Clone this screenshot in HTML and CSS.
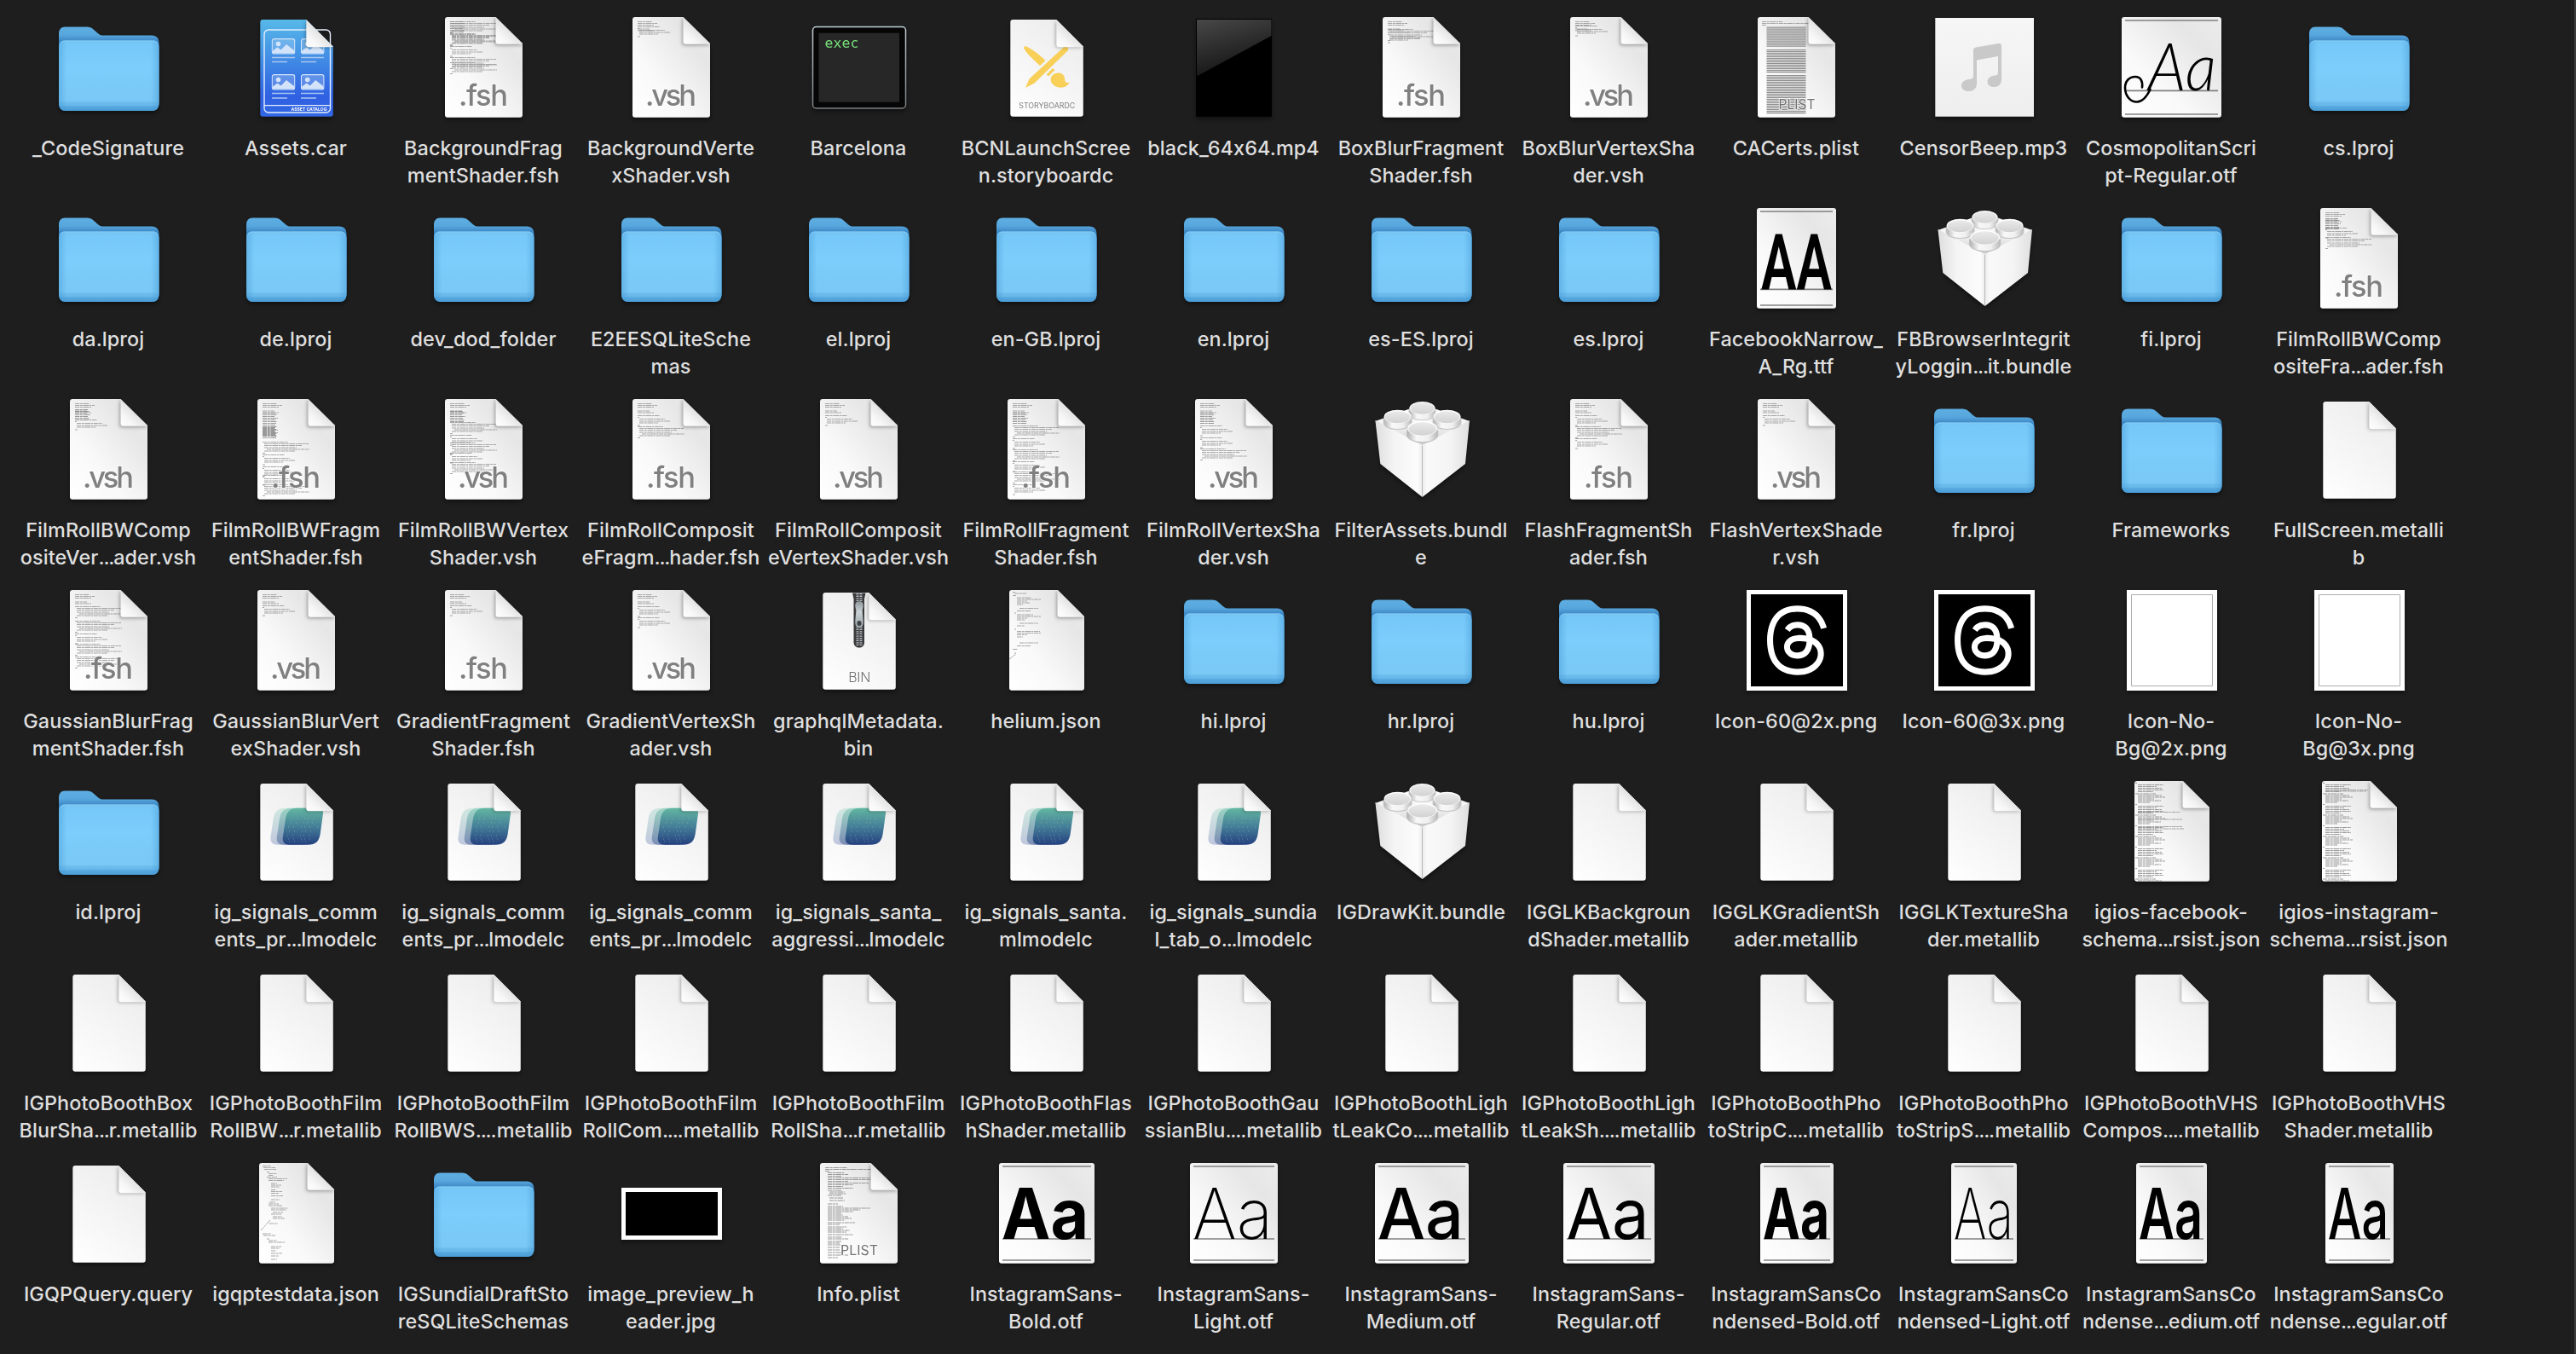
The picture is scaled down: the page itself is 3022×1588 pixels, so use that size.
FILE: index.html
```html
<!DOCTYPE html>
<html lang="en">
<head>
<meta charset="utf-8">
<title>Barcelona.app</title>
<link rel="stylesheet" href="styles.css">
</head>
<body>
<svg class="sprite" aria-hidden="true">
  <defs>
    <linearGradient id="g-paper" x1="0" y1="1" x2="1" y2="0"><stop offset="0" stop-color="#fff"/><stop offset=".35" stop-color="#f9f9f9"/><stop offset=".75" stop-color="#e6e6e6"/><stop offset="1" stop-color="#ececec"/></linearGradient>
    <linearGradient id="g-plain" x1="0" y1="1" x2=".6" y2="0"><stop offset="0" stop-color="#fff"/><stop offset="1" stop-color="#ededed"/></linearGradient>
    <linearGradient id="g-fold" x1="0" y1="1" x2=".55" y2=".4"><stop offset="0" stop-color="#fff"/><stop offset=".45" stop-color="#f6f6f6"/><stop offset="1" stop-color="#dedede"/></linearGradient>
    <linearGradient id="g-back" x1="0" y1="0" x2="0" y2="1"><stop offset="0" stop-color="#5eaee3"/><stop offset=".1" stop-color="#57a6dd"/><stop offset=".17" stop-color="#3d86c4"/><stop offset="1" stop-color="#3d86c4"/></linearGradient>
    <linearGradient id="g-front" x1="0" y1="0" x2="0" y2="1"><stop offset="0" stop-color="#74c3f2"/><stop offset=".06" stop-color="#76c8f8"/><stop offset=".4" stop-color="#7ccdfb"/><stop offset=".86" stop-color="#79c8f5"/><stop offset=".88" stop-color="#6cbcec"/><stop offset=".92" stop-color="#68b8ea"/><stop offset=".94" stop-color="#56a8df"/><stop offset="1" stop-color="#4c9dd6"/></linearGradient>
    <linearGradient id="g-side" x1="0" x2="1" y1="0" y2="0"><stop offset="0" stop-color="#3f93d0" stop-opacity=".4"/><stop offset=".08" stop-color="#3f93d0" stop-opacity="0"/><stop offset=".92" stop-color="#3f93d0" stop-opacity="0"/><stop offset="1" stop-color="#3f93d0" stop-opacity=".4"/></linearGradient>
    <linearGradient id="g-asset" x1="0" y1="0" x2="0" y2="1"><stop offset="0" stop-color="#57b9e9"/><stop offset=".45" stop-color="#3f87e4"/><stop offset=".8" stop-color="#2f60e2"/><stop offset="1" stop-color="#3367e4"/></linearGradient>
    <linearGradient id="g-ml" x1="0" y1="0" x2="0" y2="1"><stop offset="0" stop-color="#63b7a2"/><stop offset=".5" stop-color="#457f98"/><stop offset="1" stop-color="#24407f"/></linearGradient>
    <linearGradient id="g-ml2" x1="0" y1="0" x2="0" y2="1"><stop offset="0" stop-color="#9dd5c5"/><stop offset="1" stop-color="#7d8db5"/></linearGradient>
    <linearGradient id="g-ml3" x1="0" y1="0" x2="0" y2="1"><stop offset="0" stop-color="#d0e8e0"/><stop offset="1" stop-color="#bfc7dd"/></linearGradient>
    <linearGradient id="g-gloss" x1="0" y1="0" x2=".35" y2="1"><stop offset="0" stop-color="#484848"/><stop offset="1" stop-color="#141414"/></linearGradient>
    <linearGradient id="g-rim" x1="0" y1="0" x2="0" y2="1"><stop offset="0" stop-color="#c3d0d6"/><stop offset="1" stop-color="#7b7f82"/></linearGradient>
    <linearGradient id="g-bl" x1="0" y1="0" x2="1" y2="0"><stop offset="0" stop-color="#dedede"/><stop offset=".4" stop-color="#f4f4f4"/><stop offset=".9" stop-color="#fcfcfc"/><stop offset="1" stop-color="#ececec"/></linearGradient>
    <linearGradient id="g-br" x1="0" y1="0" x2="1" y2="0"><stop offset="0" stop-color="#ececec"/><stop offset=".1" stop-color="#f9f9f9"/><stop offset=".6" stop-color="#f4f4f4"/><stop offset="1" stop-color="#dfdfdf"/></linearGradient>
    <linearGradient id="g-top" x1="0" y1="0" x2="0" y2="1"><stop offset="0" stop-color="#fff"/><stop offset=".5" stop-color="#f4f4f4"/><stop offset="1" stop-color="#cdcdcd"/></linearGradient>
    <linearGradient id="g-studside" x1="0" y1="0" x2="1" y2="0"><stop offset="0" stop-color="#b4b4b4"/><stop offset=".3" stop-color="#f8f8f8"/><stop offset=".7" stop-color="#f0f0f0"/><stop offset="1" stop-color="#bcbcbc"/></linearGradient>
    <linearGradient id="g-studtop" x1="0" y1="0" x2="0" y2="1"><stop offset="0" stop-color="#eaeaea"/><stop offset="1" stop-color="#d2d2d2"/></linearGradient>
    <linearGradient id="g-mp3" x1="0" y1="0" x2="0" y2="1"><stop offset="0" stop-color="#f6f6f6"/><stop offset="1" stop-color="#eee"/></linearGradient>
    <linearGradient id="g-pull" x1="0" y1="0" x2="0" y2="1"><stop offset="0" stop-color="#8d979c"/><stop offset=".4" stop-color="#c9d2d6"/><stop offset="1" stop-color="#9aa4a9"/></linearGradient>
    <filter id="f-soft" x="-50%" y="-50%" width="200%" height="200%"><feGaussianBlur stdDeviation="2"/></filter>
    <clipPath id="k-text"><path d="M21 5h56.500l31.500 31v83.700a3 3 0 0 1-3 3H21a3 3 0 0 1-3-3V8a3 3 0 0 1 3-3z"/></clipPath>
    <clipPath id="k-json"><path d="M23 5h54l31 31v83.700a3 3 0 0 1-3 3H23a3 3 0 0 1-3-3V8a3 3 0 0 1 3-3z"/></clipPath>
    <clipPath id="k-plain"><path d="M24.300 8h51l31.500 31.500v79.300a3 3 0 0 1-3 3H24.300a3 3 0 0 1-3-3V11a3 3 0 0 1 3-3z"/></clipPath>
  </defs>

  <symbol id="folder" viewBox="0 0 128 128">
    <path fill="url(#g-back)" d="M5 25c0-5.500 2.500-8.500 7.500-8.500H37c4.500 0 6.500 1 9.500 3.700l4.500 4c2.500 2 4 2.300 7 2.300h56c6 0 8.500 3.500 8.500 9V105c0 6-3 10-8.500 10H13c-5.500 0-8-4-8-10z"/>
    <path fill="url(#g-front)" d="M5 41c0-6 2.500-8.500 7-8.500h103.500c4.500 0 7 2.500 7 8.500v65c0 6-3 9-8 9H13c-5 0-8-3-8-9z"/>
    <path fill="url(#g-side)" d="M5 41c0-6 2.500-8.500 7-8.500h103.500c4.500 0 7 2.500 7 8.500v65c0 6-3 9-8 9H13c-5 0-8-3-8-9z"/>
    <path fill="none" stroke="#8fd3f8" stroke-opacity=".7" d="M7 36.500c1-2.300 2.500-3.500 5-3.500h103.500c2.500 0 4 1.200 5 3.500"/>
  </symbol>

  <symbol id="plain" viewBox="0 0 128 128">
    <g clip-path="url(#k-plain)"><path fill="url(#g-plain)" d="M21 8h86v114H21z"/><path fill="#000" fill-opacity=".34" filter="url(#f-soft)" d="M74.500 9v31.500h32z"/></g>
    <path fill="url(#g-fold)" d="M75.300 8l31.500 31.500c-1 .7-2 .7-3 .7H78.300c-2 0-3-1-3-3z"/>
  </symbol>
  <symbol id="text" viewBox="0 0 128 128">
    <path fill="url(#g-paper)" d="M21 5h56.500l31.500 31v83.700a3 3 0 0 1-3 3H21a3 3 0 0 1-3-3V8a3 3 0 0 1 3-3z"/>
  </symbol>
  <symbol id="text-fold" viewBox="0 0 128 128">
    <g clip-path="url(#k-text)"><path fill="#000" fill-opacity=".36" filter="url(#f-soft)" d="M76.500 5v33h33z"/></g>
    <path fill="url(#g-fold)" d="M77.500 5L109 36c-1 .7-2 .7-3 .7H80.500c-2 0-3-1-3-3z"/>
  </symbol>
  <symbol id="json" viewBox="0 0 128 128">
    <path fill="url(#g-paper)" d="M23 5h54l31 31v83.700a3 3 0 0 1-3 3H23a3 3 0 0 1-3-3V8a3 3 0 0 1 3-3z"/>
  </symbol>
  <symbol id="json-fold" viewBox="0 0 128 128">
    <g clip-path="url(#k-json)"><path fill="#000" fill-opacity=".36" filter="url(#f-soft)" d="M75.500 5v33h33z"/></g>
    <path fill="url(#g-fold)" d="M76.500 5L108 36c-1 .7-2 .7-3 .7H79.500c-2 0-3-1-3-3z"/>
  </symbol>

  <!-- blocks of tiny source code, combined per file -->
  <symbol id="c-head" viewBox="0 0 128 128" overflow="visible"><path class="code" d="M24 10.500h17M24 12.500h23M24 14.500h19M24 19h14M24 21h19"/></symbol>
  <symbol id="c-decl" viewBox="0 0 128 128" overflow="visible"><path class="code bold" d="M24 10.500h15M24 12.500h17M24 14.500h14M24 16.500h18M24 18.500h15M24 20.500h17M24 22.500h16"/></symbol>
  <symbol id="c-func" viewBox="0 0 128 128" overflow="visible"><path class="code" d="M24 10.500h26M24 12.500h2M26 14.500h30M26 17h36M26 19h22M24 22h3"/></symbol>
  <symbol id="c-wide" viewBox="0 0 128 128" overflow="visible"><path class="code" d="M24 10.500h30M26 12.500h52M26 14.500h44M26 17h38M29 19h50M26 21h36M24 23.500h3"/></symbol>
  <symbol id="c-data" viewBox="0 0 128 128" overflow="visible"><path class="code bold" d="M21 7.500h2M24 9.500h30M24 11.500h22M24 13.500h28M24 15.500h30M24 17.500h18M21 20h24M24 22h28M24 24h32M24 26h19M24 28h27M24 30h14"/></symbol>

  <symbol id="brick" viewBox="0 0 128 128">
    <path fill="url(#g-top)" d="M9.400 31L64.600 11l55.400 20-55.400 29z"/>
    <path fill="url(#g-bl)" d="M9.400 30l55.200 29v61L15.300 81z"/>
    <path fill="url(#g-br)" d="M120 30L64.600 59v61L115 81z"/>
    <g id="stud"><path fill="#888" fill-opacity=".4" d="M48.500 17v5c0 5 7 8 16 8s16-3 16-8v-5z"/><path fill="url(#g-studside)" d="M49.500 15v7c0 4 6.500 7 15 7s15-3 15-7v-7z"/><ellipse cx="64.500" cy="15.500" rx="15" ry="7.500" fill="#fff"/><ellipse cx="64.500" cy="16" rx="14" ry="6.700" fill="url(#g-studtop)"/></g>
    <use href="#stud" transform="translate(-32.800 9.300) scale(1.060)"/>
    <use href="#stud" transform="translate(25.200 9.300) scale(1.060)"/>
    <use href="#stud" transform="translate(-10.200 21.500) scale(1.160)"/>
  </symbol>

  <symbol id="ml" viewBox="0 0 128 128">
    <path fill="url(#g-plain)" d="M24.300 8h51l31.500 31.500v79.300a3 3 0 0 1-3 3H24.300a3 3 0 0 1-3-3V11a3 3 0 0 1 3-3z"/>
    <g transform="translate(-14.300)"><path fill="url(#g-ml3)" d="M65 36.700h25c4 0 5.500 2.500 5 6.500l-3.200 23c-1.400 10-5.800 13.500-14.300 13.500H56c-6 0-9-3-8.200-9l3-20.500C52.200 40.500 56.500 36.700 65 36.700z"/></g>
    <g transform="translate(-7)"><path fill="url(#g-ml2)" d="M65 36.700h25c4 0 5.500 2.500 5 6.500l-3.200 23c-1.400 10-5.800 13.500-14.300 13.500H56c-6 0-9-3-8.200-9l3-20.500C52.200 40.500 56.500 36.700 65 36.700z"/></g>
    <path fill="url(#g-ml)" d="M65 36.700h25c4 0 5.500 2.500 5 6.500l-3.200 23c-1.400 10-5.800 13.500-14.300 13.500H56c-6 0-9-3-8.200-9l3-20.500C52.200 40.500 56.500 36.700 65 36.700z"/>
    <path fill="none" stroke="#b8dccf" stroke-opacity=".4" stroke-dasharray="1 5 1 8 1 3" d="M58 49h34M57 54h34M54 59h36M55 64h34M53 69h34M54 73h30M55 76h24"/>
    <g clip-path="url(#k-plain)"><path fill="#000" fill-opacity=".34" filter="url(#f-soft)" d="M74.500 9v31.500h32z"/></g>
    <path fill="url(#g-fold)" d="M75.300 8l31.500 31.500c-1 .7-2 .7-3 .7H78.300c-2 0-3-1-3-3z"/>
  </symbol>

  <symbol id="picture" viewBox="0 0 28 19"><rect x=".7" y=".7" width="26.600" height="17.300" rx="2.500" fill="#fff" fill-opacity=".2" stroke="#d3e4fa" stroke-width="1.200"/><circle cx="8" cy="6.500" r="2.800" fill="#d3e4fa"/><path fill="#d3e4fa" d="M1.500 17.500v-3l5.500-4 4 3 6.500-6.500 9 7v3.500z"/></symbol>

  <symbol id="threads" viewBox="0 0 128 128">
    <path fill="#fff" d="M5 5h118v118H5z"/><path d="M10 10h108v108H10z"/>
    <path fill="#fff" transform="translate(23.500 23.300) scale(.424)" d="M141.537 88.988a66.667 66.667 0 0 0-2.518-1.143c-1.482-27.307-16.403-42.940-41.457-43.100h-.340c-14.986 0-27.449 6.396-35.120 18.036l13.779 9.452c5.730-8.695 14.724-10.548 21.348-10.548h.229c8.249.053 14.474 2.452 18.503 7.129 2.932 3.405 4.893 8.111 5.864 14.050-7.314-1.243-15.224-1.626-23.680-1.140-23.820 1.371-39.134 15.264-38.105 34.568.522 9.792 5.400 18.216 13.735 23.719 7.047 4.652 16.124 6.927 25.557 6.412 12.458-.683 22.231-5.436 29.049-14.127 5.178-6.600 8.453-15.153 9.899-25.930 5.937 3.583 10.337 8.298 12.767 13.966 4.132 9.635 4.373 25.468-8.546 38.376-11.319 11.308-24.925 16.200-45.488 16.351-22.809-.169-40.060-7.484-51.275-21.742C35.236 139.966 29.808 120.682 29.605 96c.203-24.682 5.630-43.966 16.133-57.317C56.954 24.425 74.204 17.110 97.013 16.940c22.975.170 40.526 7.520 52.171 21.847 5.710 7.026 10.015 15.861 12.853 26.163l16.147-4.308c-3.440-12.680-8.853-23.606-16.219-32.668C147.036 9.607 125.202.195 97.070 0h-.113C68.882.194 47.292 9.642 32.788 28.079 19.882 44.486 13.224 67.316 13.001 95.932L13 96v.067c.224 28.617 6.882 51.447 19.788 67.854C47.292 182.358 68.882 191.806 96.957 192h.113c24.960-.173 42.554-6.708 57.048-21.189 18.963-18.945 18.392-42.692 12.142-57.270-4.484-10.454-13.033-18.945-24.723-24.553zM98.440 129.507c-10.440.588-21.286-4.098-21.820-14.135-.397-7.442 5.296-15.746 22.461-16.735 1.966-.114 3.895-.169 5.790-.169 6.235 0 12.135.606 17.500 1.777-1.998 24.983-13.728 28.701-23.931 29.262z"/>
  </symbol>
  <symbol id="blank" viewBox="0 0 128 128"><path fill="#fff" d="M11 5h106v118H11z"/><path fill="none" stroke="#adadad" d="M16.500 10.500h95v107h-95z"/></symbol>
</svg>

<main class="files">
  <div class="file"><svg class="icon"><use href="#folder"/></svg><p class="name">_CodeSignature</p></div>
  <div class="file"><svg class="icon" viewBox="0 0 128 128">
    <path fill="url(#g-asset)" d="M24.300 8h51l31.500 31.500v79.300a3 3 0 0 1-3 3H24.300a3 3 0 0 1-3-3V11a3 3 0 0 1 3-3z"/>
    <rect x="26" y="20" width="77.500" height="97" rx="5" fill="none" stroke="#e4effc" stroke-width="1.400"/><path stroke="#e4effc" stroke-width="1.200" d="M26 108.700h77.500"/>
    <use href="#picture" x="34.500" y="30" width="28" height="19"/><use href="#picture" x="68.700" y="30" width="28" height="19"/>
    <use href="#picture" x="34.500" y="72" width="28" height="19"/><use href="#picture" x="68.700" y="72" width="28" height="19"/>
    <path stroke="#a9c6f4" stroke-width="1.300" d="M35 52.500h27M69 52.500h27M35 57.500h18M69 57.500h18M35 94.500h27M69 94.500h27M35 100h18M69 100h18"/>
    <text x="99.500" y="114.800" class="tag asset" textLength="42" lengthAdjust="spacingAndGlyphs">ASSET CATALOG</text>
    <g clip-path="url(#k-plain)"><path fill-opacity=".34" filter="url(#f-soft)" d="M74.500 9v31.500h32z"/></g>
    <path fill="url(#g-fold)" d="M75.300 8l31.500 31.500c-1 .7-2 .7-3 .7H78.300c-2 0-3-1-3-3z"/></svg><p class="name">Assets.car</p></div>
  <div class="file"><svg class="icon" viewBox="0 0 128 128"><use href="#text"/><use href="#c-decl"/><use href="#c-wide"/><use href="#c-wide" y="14"/><use href="#c-wide" y="15"/><use href="#c-func" y="29"/><use href="#c-wide" y="42"/><use href="#c-wide" y="48"/><use href="#text-fold"/><text class="ext" x="63" y="109" textLength="58">.fsh</text></svg><p class="name">BackgroundFrag<br>mentShader.fsh</p></div>
  <div class="file"><svg class="icon" viewBox="0 0 128 128"><use href="#text"/><use href="#c-head"/><use href="#c-func" y="6"/><use href="#text-fold"/><text class="ext" x="63" y="109" textLength="60">.vsh</text></svg><p class="name">BackgroundVerte<br>xShader.vsh</p></div>
  <div class="file"><svg class="icon" viewBox="0 0 128 128"><rect x="9.500" y="16.500" width="109" height="95.500" rx="4" fill="#060606" stroke="url(#g-rim)" stroke-width="1.500"/><path fill="#272727" d="M16.500 23.700h94.500v81H16.500z"/><text class="exec" x="23.500" y="41" textLength="40">exec</text></svg><p class="name">Barcelona</p></div>
  <div class="file"><svg class="icon" viewBox="0 0 128 128"><path fill="url(#g-plain)" d="M24.300 8h51l31.500 31.500v79.300a3 3 0 0 1-3 3H24.300a3 3 0 0 1-3-3V11a3 3 0 0 1 3-3z"/>
    <path fill="#f8cf57" d="M38 39c6 1 20 12 24.500 17l-6.500 6C51 57 38 46 37.200 41z"/>
    <path fill="#f8cf57" d="M81 43l4-3.500c2-1 5 1.500 4 4.500l-4 4L49.500 82.500 39 88l4.500-10.500z"/>
    <path fill="#f8cf57" d="M63.500 72.500L71 65l2.500 2-7.500 7.500z"/>
    <path fill="#f8cf57" d="M70.500 73.500C76 68 85 71 85 77c0 4.500 2 5.500 5.500 5-2 4-7 6.500-12 5.500C69 86 66.500 78 70.500 73.500z"/>
    <text class="tag story" x="64.300" y="112" textLength="66" lengthAdjust="spacingAndGlyphs">STORYBOARDC</text>
    <g clip-path="url(#k-plain)"><path fill-opacity=".34" filter="url(#f-soft)" d="M74.500 9v31.500h32z"/></g>
    <path fill="url(#g-fold)" d="M75.300 8l31.500 31.500c-1 .7-2 .7-3 .7H78.300c-2 0-3-1-3-3z"/></svg><p class="name">BCNLaunchScree<br>n.storyboardc</p></div>
  <div class="file"><svg class="icon" viewBox="0 0 128 128"><path d="M19 7h89v114.700H19z"/><path fill="url(#g-gloss)" d="M20 8h87.500v19L20 74.500z"/></svg><p class="name">black_64x64.mp4</p></div>
  <div class="file"><svg class="icon" viewBox="0 0 128 128"><use href="#text"/><use href="#c-head"/><use href="#c-wide" y="9"/><use href="#c-func" y="13"/><use href="#text-fold"/><text class="ext" x="63" y="109" textLength="58">.fsh</text></svg><p class="name">BoxBlurFragment<br>Shader.fsh</p></div>
  <div class="file"><svg class="icon" viewBox="0 0 128 128"><use href="#text"/><use href="#c-head"/><use href="#c-func" y="5"/><use href="#text-fold"/><text class="ext" x="63" y="109" textLength="60">.vsh</text></svg><p class="name">BoxBlurVertexSha<br>der.vsh</p></div>
  <div class="file"><svg class="icon" viewBox="0 0 128 128"><use href="#text"/><path class="code" d="M23 10.500h24M23 12.500h55M23 14.500h5"/><path class="cert" d="M51.500 16.500v24M51.500 43v27.500M51.500 73v46"/><use href="#text-fold"/><text class="kind" x="64" y="112.700" textLength="43" lengthAdjust="spacingAndGlyphs">PLIST</text></svg><p class="name">CACerts.plist</p></div>
  <div class="file"><svg class="icon" viewBox="0 0 128 128"><path fill="url(#g-mp3)" d="M6.300 6H122v115.700H6.300z"/><path fill="#c9c9c9" d="M51 44c0-2 1-3 3-3.500L80.500 36c2.500-.5 3.500.5 3.500 3v39c0 6-3.500 9-8.500 9-4.500 0-8-2-8-6s3.500-7 9-7.500c2.500-.2 3.500-1 3.500-3.500V51l-25 4.500v27c0 6.500-4 9.500-9.500 9.500-5 0-8.500-2.500-8.500-6.500 0-4 3.500-7 9.500-7.500 3-.2 4.500-1 4.500-3.500z"/></svg><p class="name">CensorBeep.mp3</p></div>
  <div class="file"><svg class="icon" viewBox="0 0 128 128"><rect x="5" y="5" width="117" height="117.700" rx="3" fill="url(#g-paper)"/><path class="rule" d="M9 9h109M9 91.300h109M9 119h109"/><path class="swash" d="M38.500 90c-4 8-8.500 14.500-15.500 14.500-8.500 0-14-8-14-16.500 0-8 5-13 12-13 6 0 9 5 8 12.500"/><text class="glyph script" x="36" y="91" textLength="80" lengthAdjust="spacingAndGlyphs">Aa</text></svg><p class="name">CosmopolitanScri<br>pt-Regular.otf</p></div>
  <div class="file"><svg class="icon"><use href="#folder"/></svg><p class="name">cs.lproj</p></div>

  <div class="file"><svg class="icon"><use href="#folder"/></svg><p class="name">da.lproj</p></div>
  <div class="file"><svg class="icon"><use href="#folder"/></svg><p class="name">de.lproj</p></div>
  <div class="file"><svg class="icon"><use href="#folder"/></svg><p class="name">dev_dod_folder</p></div>
  <div class="file"><svg class="icon"><use href="#folder"/></svg><p class="name">E2EESQLiteSche<br>mas</p></div>
  <div class="file"><svg class="icon"><use href="#folder"/></svg><p class="name">el.lproj</p></div>
  <div class="file"><svg class="icon"><use href="#folder"/></svg><p class="name">en-GB.lproj</p></div>
  <div class="file"><svg class="icon"><use href="#folder"/></svg><p class="name">en.lproj</p></div>
  <div class="file"><svg class="icon"><use href="#folder"/></svg><p class="name">es-ES.lproj</p></div>
  <div class="file"><svg class="icon"><use href="#folder"/></svg><p class="name">es.lproj</p></div>
  <div class="file"><svg class="icon" viewBox="0 0 128 128"><rect x="17" y="5" width="93" height="117.700" rx="3" fill="url(#g-paper)"/><path class="rule" d="M21 9h85M21 100.300h85M21 119h85"/><text class="glyph narrow" x="22" y="100.300" textLength="83" lengthAdjust="spacingAndGlyphs">AA</text></svg><p class="name">FacebookNarrow_<br>A_Rg.ttf</p></div>
  <div class="file"><svg class="icon"><use href="#brick"/></svg><p class="name">FBBrowserIntegrit<br>yLoggin<span class="cut">...</span>it.bundle</p></div>
  <div class="file"><svg class="icon"><use href="#folder"/></svg><p class="name">fi.lproj</p></div>
  <div class="file"><svg class="icon" viewBox="0 0 128 128"><use href="#text"/><use href="#c-head"/><use href="#c-decl" y="7"/><use href="#c-func" y="18"/><use href="#c-wide" y="29"/><use href="#text-fold"/><text class="ext" x="63" y="109" textLength="58">.fsh</text></svg><p class="name">FilmRollBWComp<br>ositeFra<span class="cut">...</span>ader.fsh</p></div>

  <div class="file"><svg class="icon" viewBox="0 0 128 128"><use href="#text"/><use href="#c-head"/><use href="#c-decl" y="7"/><use href="#c-func" y="19"/><use href="#text-fold"/><text class="ext" x="63" y="109" textLength="60">.vsh</text></svg><p class="name">FilmRollBWComp<br>ositeVer<span class="cut">...</span>ader.vsh</p></div>
  <div class="file"><svg class="icon" viewBox="0 0 128 128"><use href="#text"/><use href="#c-head"/><use href="#c-decl" y="11"/><use href="#c-decl" y="25"/><use href="#c-decl" y="28"/><use href="#c-wide" y="45"/><use href="#c-func" y="60"/><use href="#c-func" y="74"/><use href="#c-func" y="84"/><use href="#c-wide" y="95"/><use href="#text-fold"/><text class="ext" x="63" y="109" textLength="58">.fsh</text></svg><p class="name">FilmRollBWFragm<br>entShader.fsh</p></div>
  <div class="file"><svg class="icon" viewBox="0 0 128 128"><use href="#text"/><use href="#c-head"/><use href="#c-decl" y="9"/><use href="#c-wide" y="22"/><use href="#c-func" y="37"/><use href="#c-wide" y="46"/><use href="#c-func" y="58"/><use href="#c-wide" y="69"/><use href="#text-fold"/><text class="ext" x="63" y="109" textLength="60">.vsh</text></svg><p class="name">FilmRollBWVertex<br>Shader.vsh</p></div>
  <div class="file"><svg class="icon" viewBox="0 0 128 128"><use href="#text"/><use href="#c-head"/><use href="#c-func" y="14"/><use href="#c-wide" y="27"/><use href="#text-fold"/><text class="ext" x="63" y="109" textLength="58">.fsh</text></svg><p class="name">FilmRollComposit<br>eFragm<span class="cut">...</span>hader.fsh</p></div>
  <div class="file"><svg class="icon" viewBox="0 0 128 128"><use href="#text"/><use href="#c-head"/><use href="#c-func" y="14"/><use href="#text-fold"/><text class="ext" x="63" y="109" textLength="60">.vsh</text></svg><p class="name">FilmRollComposit<br>eVertexShader.vsh</p></div>
  <div class="file"><svg class="icon" viewBox="0 0 128 128"><use href="#text"/><use href="#c-head"/><use href="#c-decl" y="11"/><use href="#c-wide" y="26"/><use href="#c-func" y="41"/><use href="#c-wide" y="54"/><use href="#c-func" y="68"/><use href="#c-wide" y="80"/><use href="#c-func" y="95"/><use href="#text-fold"/><text class="ext" x="63" y="109" textLength="58">.fsh</text></svg><p class="name">FilmRollFragment<br>Shader.fsh</p></div>
  <div class="file"><svg class="icon" viewBox="0 0 128 128"><use href="#text"/><use href="#c-head"/><use href="#c-decl" y="11"/><use href="#c-func" y="26"/><use href="#c-func" y="40"/><use href="#c-wide" y="53"/><use href="#text-fold"/><text class="ext" x="63" y="109" textLength="60">.vsh</text></svg><p class="name">FilmRollVertexSha<br>der.vsh</p></div>
  <div class="file"><svg class="icon"><use href="#brick"/></svg><p class="name">FilterAssets.bundl<br>e</p></div>
  <div class="file"><svg class="icon" viewBox="0 0 128 128"><use href="#text"/><use href="#c-head"/><use href="#c-func" y="14"/><use href="#c-wide" y="27"/><use href="#c-func" y="41"/><use href="#text-fold"/><text class="ext" x="63" y="109" textLength="58">.fsh</text></svg><p class="name">FlashFragmentSh<br>ader.fsh</p></div>
  <div class="file"><svg class="icon" viewBox="0 0 128 128"><use href="#text"/><use href="#c-head"/><use href="#c-func" y="14"/><use href="#text-fold"/><text class="ext" x="63" y="109" textLength="60">.vsh</text></svg><p class="name">FlashVertexShade<br>r.vsh</p></div>
  <div class="file"><svg class="icon"><use href="#folder"/></svg><p class="name">fr.lproj</p></div>
  <div class="file"><svg class="icon"><use href="#folder"/></svg><p class="name">Frameworks</p></div>
  <div class="file"><svg class="icon"><use href="#plain"/></svg><p class="name">FullScreen.metalli<br>b</p></div>

  <div class="file"><svg class="icon" viewBox="0 0 128 128"><use href="#text"/><use href="#c-head"/><use href="#c-wide" y="14"/><use href="#c-wide" y="31"/><use href="#c-func" y="46"/><use href="#c-wide" y="58"/><use href="#c-wide" y="73"/><use href="#text-fold"/><text class="ext" x="63" y="109" textLength="58">.fsh</text></svg><p class="name">GaussianBlurFrag<br>mentShader.fsh</p></div>
  <div class="file"><svg class="icon" viewBox="0 0 128 128"><use href="#text"/><use href="#c-head"/><use href="#c-func" y="13"/><use href="#text-fold"/><text class="ext" x="63" y="109" textLength="60">.vsh</text></svg><p class="name">GaussianBlurVert<br>exShader.vsh</p></div>
  <div class="file"><svg class="icon" viewBox="0 0 128 128"><use href="#text"/><use href="#c-head"/><use href="#c-func" y="13"/><use href="#text-fold"/><text class="ext" x="63" y="109" textLength="58">.fsh</text></svg><p class="name">GradientFragment<br>Shader.fsh</p></div>
  <div class="file"><svg class="icon" viewBox="0 0 128 128"><use href="#text"/><use href="#c-head"/><use href="#c-func" y="14"/><use href="#c-func" y="27"/><use href="#text-fold"/><text class="ext" x="63" y="109" textLength="60">.vsh</text></svg><p class="name">GradientVertexSh<br>ader.vsh</p></div>
  <div class="file"><svg class="icon" viewBox="0 0 128 128"><use href="#plain"/>
    <path fill="#3a3a3c" d="M56 8.500h15.500l-1.500 7V66c0 4-2 6.500-6 6.500s-6.500-2.500-6.500-6.500V15.500z"/>
    <path stroke="#b9c0c4" stroke-width="7" stroke-dasharray="1.300 1.300" d="M64 9v61"/><path stroke="#4c4c4e" stroke-width="1.300" d="M64 9v61"/>
    <path fill="url(#g-pull)" d="M60 20c1.500-2.500 6.500-2.500 8 0 1.500 2.500.5 5.500-.5 9 .5 5 1.200 10 1.200 14 0 8-9.400 8-9.400 0 0-4 .7-9 1.200-14-1-3.500-2-6.500-.5-9z"/><ellipse cx="64" cy="44" rx="2.600" ry="3" fill="#3d4144"/>
    <text class="kind thin" x="64.300" y="113" textLength="26">BIN</text></svg><p class="name">graphqlMetadata.<br>bin</p></div>
  <div class="file"><svg class="icon" viewBox="0 0 128 128"><use href="#json"/><path class="code light" d="M24 7.500h3M26 9h14M24 11.500h4M29 14h17M29 16h28M29 18h12M29 20h15M29 22h7M32 26.500h22M29 29.500h16M26 32h2M29 34h19M29 36h28M29 38h12M29 40h10M32 44h22M29 47h9M26 51h2M29 53.500h27M29 55.500h28M29 57.500h12M29 60h7M32 67h22M29 70.500h16M24 74.500h6M26 79h2M20 86l8-6"/><use href="#json-fold"/></svg><p class="name">helium.json</p></div>
  <div class="file"><svg class="icon"><use href="#folder"/></svg><p class="name">hi.lproj</p></div>
  <div class="file"><svg class="icon"><use href="#folder"/></svg><p class="name">hr.lproj</p></div>
  <div class="file"><svg class="icon"><use href="#folder"/></svg><p class="name">hu.lproj</p></div>
  <div class="file"><svg class="icon"><use href="#threads"/></svg><p class="name">Icon-60@2x.png</p></div>
  <div class="file"><svg class="icon"><use href="#threads"/></svg><p class="name">Icon-60@3x.png</p></div>
  <div class="file"><svg class="icon"><use href="#blank"/></svg><p class="name">Icon-No-<br>Bg@2x.png</p></div>
  <div class="file"><svg class="icon"><use href="#blank"/></svg><p class="name">Icon-No-<br>Bg@3x.png</p></div>

  <div class="file"><svg class="icon"><use href="#folder"/></svg><p class="name">id.lproj</p></div>
  <div class="file"><svg class="icon"><use href="#ml"/></svg><p class="name">ig_signals_comm<br>ents_pr<span class="cut">...</span>lmodelc</p></div>
  <div class="file"><svg class="icon"><use href="#ml"/></svg><p class="name">ig_signals_comm<br>ents_pr<span class="cut">...</span>lmodelc</p></div>
  <div class="file"><svg class="icon"><use href="#ml"/></svg><p class="name">ig_signals_comm<br>ents_pr<span class="cut">...</span>lmodelc</p></div>
  <div class="file"><svg class="icon"><use href="#ml"/></svg><p class="name">ig_signals_santa_<br>aggressi<span class="cut">...</span>lmodelc</p></div>
  <div class="file"><svg class="icon"><use href="#ml"/></svg><p class="name">ig_signals_santa.<br>mlmodelc</p></div>
  <div class="file"><svg class="icon"><use href="#ml"/></svg><p class="name">ig_signals_sundia<br>l_tab_o<span class="cut">...</span>lmodelc</p></div>
  <div class="file"><svg class="icon"><use href="#brick"/></svg><p class="name">IGDrawKit.bundle</p></div>
  <div class="file"><svg class="icon"><use href="#plain"/></svg><p class="name">IGGLKBackgroun<br>dShader.metallib</p></div>
  <div class="file"><svg class="icon"><use href="#plain"/></svg><p class="name">IGGLKGradientSh<br>ader.metallib</p></div>
  <div class="file"><svg class="icon"><use href="#plain"/></svg><p class="name">IGGLKTextureSha<br>der.metallib</p></div>
  <div class="file"><svg class="icon" viewBox="0 0 128 128"><use href="#json"/><g clip-path="url(#k-json)"><use href="#c-data"/><use href="#c-data" y="25"/><use href="#c-data" y="50"/><use href="#c-data" y="75"/><use href="#c-data" y="100"/><path class="code" d="M24 41.500h50M24 50h52M24 58.500h52M24 61h54"/></g><use href="#json-fold"/></svg><p class="name">igios-facebook-<br>schema<span class="cut">...</span>rsist.json</p></div>
  <div class="file"><svg class="icon" viewBox="0 0 128 128"><use href="#json"/><g clip-path="url(#k-json)"><use href="#c-data"/><use href="#c-data" y="25"/><use href="#c-data" y="50"/><use href="#c-data" y="75"/><use href="#c-data" y="100"/><path class="code" d="M24 15.500h50M24 17h48"/></g><use href="#json-fold"/></svg><p class="name">igios-instagram-<br>schema<span class="cut">...</span>rsist.json</p></div>

  <div class="file"><svg class="icon"><use href="#plain"/></svg><p class="name">IGPhotoBoothBox<br>BlurSha<span class="cut">...</span>r.metallib</p></div>
  <div class="file"><svg class="icon"><use href="#plain"/></svg><p class="name">IGPhotoBoothFilm<br>RollBW<span class="cut">...</span>r.metallib</p></div>
  <div class="file"><svg class="icon"><use href="#plain"/></svg><p class="name">IGPhotoBoothFilm<br>RollBWS<span class="cut">...</span>.metallib</p></div>
  <div class="file"><svg class="icon"><use href="#plain"/></svg><p class="name">IGPhotoBoothFilm<br>RollCom<span class="cut">...</span>.metallib</p></div>
  <div class="file"><svg class="icon"><use href="#plain"/></svg><p class="name">IGPhotoBoothFilm<br>RollSha<span class="cut">...</span>r.metallib</p></div>
  <div class="file"><svg class="icon"><use href="#plain"/></svg><p class="name">IGPhotoBoothFlas<br>hShader.metallib</p></div>
  <div class="file"><svg class="icon"><use href="#plain"/></svg><p class="name">IGPhotoBoothGau<br>ssianBlu<span class="cut">...</span>.metallib</p></div>
  <div class="file"><svg class="icon"><use href="#plain"/></svg><p class="name">IGPhotoBoothLigh<br>tLeakCo<span class="cut">...</span>.metallib</p></div>
  <div class="file"><svg class="icon"><use href="#plain"/></svg><p class="name">IGPhotoBoothLigh<br>tLeakSh<span class="cut">...</span>.metallib</p></div>
  <div class="file"><svg class="icon"><use href="#plain"/></svg><p class="name">IGPhotoBoothPho<br>toStripC<span class="cut">...</span>.metallib</p></div>
  <div class="file"><svg class="icon"><use href="#plain"/></svg><p class="name">IGPhotoBoothPho<br>toStripS<span class="cut">...</span>.metallib</p></div>
  <div class="file"><svg class="icon"><use href="#plain"/></svg><p class="name">IGPhotoBoothVHS<br>Compos<span class="cut">...</span>.metallib</p></div>
  <div class="file"><svg class="icon"><use href="#plain"/></svg><p class="name">IGPhotoBoothVHS<br>Shader.metallib</p></div>

  <div class="file"><svg class="icon"><use href="#plain"/></svg><p class="name">IGQPQuery.query</p></div>
  <div class="file"><svg class="icon" viewBox="0 0 128 128"><use href="#json"/><path class="code light" d="M24 8.500h10M25 10.500h14M26 12.500h14M29 15.500h3M31 17.500h10M31 19.500h6M29 21.500h12M31 23.500h22M31 25.500h18M34 29h7M34 31h12M34 33h10M34 36.500h6M34 38.500h13M34 40.500h9M34 43.500h14M34 48h10M32 51h7M31 53h12M31 55h16M34 58h20M34 60h18M36 63h12M34 65h12M36 68h11M36 70h14M32 76h10M22 84l11-12M24 88h10M25 90h14M29 94h3M31 96h10M31 98h20M34 103h12M34 105h10M34 108h6M34 111h13M34 114h9M34 118h7"/><use href="#json-fold"/></svg><p class="name">igqptestdata.json</p></div>
  <div class="file"><svg class="icon"><use href="#folder"/></svg><p class="name">IGSundialDraftSto<br>reSQLiteSchemas</p></div>
  <div class="file"><svg class="icon" viewBox="0 0 128 128"><path fill="#fff" d="M5 34h118v61H5z"/><path d="M10 39h108v51H10z"/></svg><p class="name">image_preview_h<br>eader.jpg</p></div>
  <div class="file"><svg class="icon" viewBox="0 0 128 128"><use href="#text"/><path class="code bold" d="M24 10.500h26M24 12.500h54M24 14.500h6M27 16.500h20M27 18.500h24M27 20.500h16M27 22.500h50M27 24.500h52M27 26.500h24M27 28.500h48M27 30.500h30M27 32.500h18M27 34.500h30M27 37h16M29 39h18M29 41h20M27 43h16M29 46h16M29 49h18M27 53h12M27 56h18M27 58h50M27 60h38M27 62h30M27 64h16M27 66h18M27 68h24M27 70h28M27 72h20M27 75h32M27 77h14M27 80h22M27 82h18M27 84h26M27 86h22M27 89h30M27 92h17M27 94h24M27 97h16M27 99h14M27 101h15M27 104h14M27 107h14M27 110h20M27 113h24M27 116h12"/><use href="#text-fold"/><text class="kind" x="64" y="112.700" textLength="44" lengthAdjust="spacingAndGlyphs">PLIST</text></svg><p class="name">Info.plist</p></div>
  <div class="file"><svg class="icon" viewBox="0 0 128 128"><rect x="8" y="5" width="112" height="117.700" rx="3" fill="url(#g-paper)"/><path class="rule" d="M12 9h104M12 94h104M12 119h104"/><text class="glyph bold" x="11" y="93.700" textLength="102" lengthAdjust="spacingAndGlyphs">Aa</text></svg><p class="name">InstagramSans-<br>Bold.otf</p></div>
  <div class="file"><svg class="icon" viewBox="0 0 128 128"><rect x="12" y="5" width="103" height="117.700" rx="3" fill="url(#g-paper)"/><path class="rule" d="M16 9h95M16 94h95M16 119h95"/><text class="glyph light" x="15" y="93.700" textLength="94" lengthAdjust="spacingAndGlyphs">Aa</text></svg><p class="name">InstagramSans-<br>Light.otf</p></div>
  <div class="file"><svg class="icon" viewBox="0 0 128 128"><rect x="9" y="5" width="110" height="117.700" rx="3" fill="url(#g-paper)"/><path class="rule" d="M13 9h102M13 94h102M13 119h102"/><text class="glyph medium" x="12" y="93.700" textLength="101" lengthAdjust="spacingAndGlyphs">Aa</text></svg><p class="name">InstagramSans-<br>Medium.otf</p></div>
  <div class="file"><svg class="icon" viewBox="0 0 128 128"><rect x="10" y="5" width="107" height="117.700" rx="3" fill="url(#g-paper)"/><path class="rule" d="M14 9h99M14 94h99M14 119h99"/><text class="glyph" x="13.500" y="93.700" textLength="97" lengthAdjust="spacingAndGlyphs">Aa</text></svg><p class="name">InstagramSans-<br>Regular.otf</p></div>
  <div class="file"><svg class="icon" viewBox="0 0 128 128"><rect x="21" y="5" width="86" height="117.700" rx="3" fill="url(#g-paper)"/><path class="rule" d="M25 9h78M25 94h78M25 119h78"/><text class="glyph bold" x="24" y="93.700" textLength="78" lengthAdjust="spacingAndGlyphs">Aa</text></svg><p class="name">InstagramSansCo<br>ndensed-Bold.otf</p></div>
  <div class="file"><svg class="icon" viewBox="0 0 128 128"><rect x="25" y="5" width="77" height="117.700" rx="3" fill="url(#g-paper)"/><path class="rule" d="M29 9h69M29 94h69M29 119h69"/><text class="glyph light" x="28" y="93.700" textLength="70" lengthAdjust="spacingAndGlyphs">Aa</text></svg><p class="name">InstagramSansCo<br>ndensed-Light.otf</p></div>
  <div class="file"><svg class="icon" viewBox="0 0 128 128"><rect x="22" y="5" width="83" height="117.700" rx="3" fill="url(#g-paper)"/><path class="rule" d="M26 9h75M26 94h75M26 119h75"/><text class="glyph semi" x="25" y="93.700" textLength="75" lengthAdjust="spacingAndGlyphs">Aa</text></svg><p class="name">InstagramSansCo<br>ndense<span class="cut">...</span>edium.otf</p></div>
  <div class="file"><svg class="icon" viewBox="0 0 128 128"><rect x="24" y="5" width="80" height="117.700" rx="3" fill="url(#g-paper)"/><path class="rule" d="M28 9h72M28 94h72M28 119h72"/><text class="glyph medium" x="27" y="93.700" textLength="71" lengthAdjust="spacingAndGlyphs">Aa</text></svg><p class="name">InstagramSansCo<br>ndense<span class="cut">...</span>egular.otf</p></div>
</main>
</body>
</html>
```

FILE: styles.css
```css
* {
  box-sizing: border-box;
}

body {
  margin: 0;
  height: 1588px;
  overflow: hidden;
  background: #1e1e1e;
  border-right: 2px solid #3d3d3d;
  font-family: Inter, "Liberation Sans", sans-serif;
}

.sprite {
  position: absolute;
  width: 0;
  height: 0;
}

.files {
  display: grid;
  grid-template-columns: repeat(13, 220px);
  grid-auto-rows: 224px;
  padding: 15px 0 0 18px;
}

.file {
  display: flex;
  flex-direction: column;
  align-items: center;
  gap: 15px;
}

.icon {
  flex: none;
  width: 128px;
  height: 128px;
  overflow: visible;
  filter: drop-shadow(0 3px 2px rgba(0, 0, 0, 0.4));
}

.name {
  margin: 0 2px 0 0;
  color: #dfdfdf;
  font-size: 23.4px;
  font-weight: 450;
  line-height: 32px;
  letter-spacing: 0.1px;
  text-align: center;
  white-space: nowrap;
}

.cut {
  letter-spacing: -1.2px;
}

/* miniature page contents */
.code {
  fill: none;
  stroke: #8c8c8c;
  stroke-opacity: 0.75;
  stroke-width: 1.1;
  stroke-dasharray: 5 0.7 3 0.7 7 0.7 2 0.7;
}

.code.bold {
  stroke: #7a7a7a;
}

.code.light {
  stroke-opacity: 0.75;
  stroke-width: 1;
}

.cert {
  fill: none;
  stroke: #8f8f8f;
  stroke-width: 46;
  stroke-dasharray: 1.2 0.8;
}

.swash {
  fill: none;
  stroke: #000;
  stroke-width: 2.6;
  stroke-linecap: round;
}

.rule {
  fill: none;
  stroke: #808080;
  stroke-width: 1.7;
}

/* lettering inside the icons */
.ext {
  fill: #808080;
  stroke: #fff;
  stroke-opacity: 0.6;
  stroke-width: 2;
  paint-order: stroke;
  font-size: 34.5px;
  font-weight: 500;
  text-anchor: middle;
}

.kind {
  fill: #707070;
  stroke: #fff;
  stroke-opacity: 0.7;
  stroke-width: 2;
  paint-order: stroke;
  font-size: 15.5px;
  text-anchor: middle;
}

.kind.thin {
  font-size: 16px;
  font-weight: 300;
}

.tag {
  fill: #808080;
  font-size: 9px;
  text-anchor: middle;
}

.tag.asset {
  fill: #fff;
  font-size: 5.3px;
  font-weight: 700;
  text-anchor: end;
}

.exec {
  fill: #77e07a;
  font-family: "DejaVu Sans Mono", monospace;
  font-size: 16.5px;
}

.glyph {
  fill: #000;
  font-size: 82px;
  font-weight: 400;
}

.glyph.light {
  font-weight: 200;
}

.glyph.medium {
  font-weight: 500;
}

.glyph.semi {
  font-weight: 600;
}

.glyph.bold {
  font-weight: 700;
}

.glyph.narrow {
  font-family: Roboto, "Liberation Sans", sans-serif;
  font-size: 91px;
  font-weight: 600;
}

.glyph.script {
  font-family: Lato, "Liberation Sans", sans-serif;
  font-size: 77px;
  font-style: italic;
  font-weight: 300;
}
```
